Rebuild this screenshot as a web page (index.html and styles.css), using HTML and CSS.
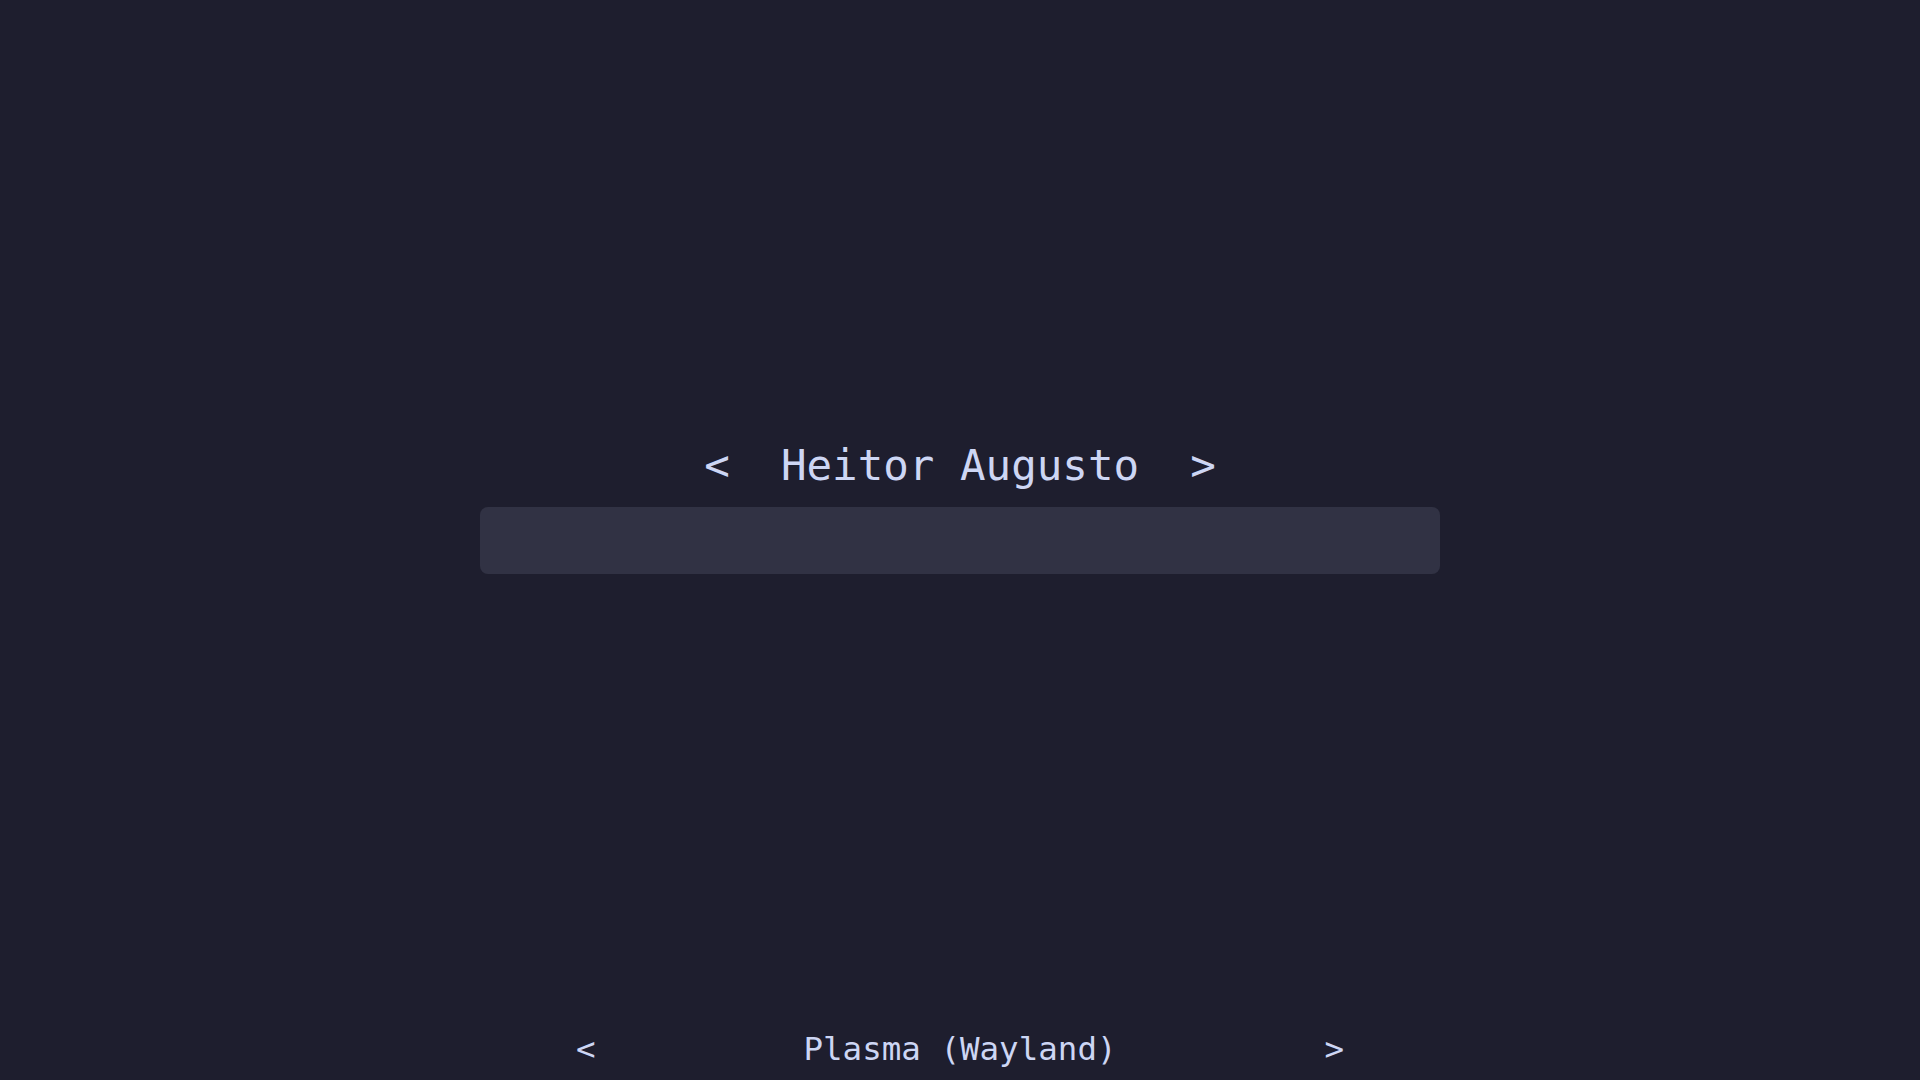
FILE: index.html
```html
<!DOCTYPE html>
<html lang="pt">
<head>
<meta charset="utf-8">
<title>Greeter</title>
<link rel="stylesheet" href="styles.css">
</head>
<body>
<main class="screen">
  <section class="login">
    <div class="user">&lt;  Heitor Augusto  &gt;</div>
    <div class="password"></div>
  </section>
  <footer class="session">
    <span class="arrow">&lt;</span>
    <span class="session-name">Plasma (Wayland)</span>
    <span class="arrow">&gt;</span>
  </footer>
</main>
</body>
</html>
```

FILE: styles.css
```css
html, body {
  margin: 0;
  padding: 0;
  background: #1e1e2e;
}

.screen {
  height: 100vh;
  display: flex;
  flex-direction: column;
  align-items: center;
  color: #cdd6f4;
  font-family: "DejaVu Sans Mono", "Liberation Mono", monospace;
}

.login {
  padding-top: 441px;
  display: flex;
  flex-direction: column;
  align-items: center;
}

.user {
  font-size: 42.5px;
  line-height: 50px;
  white-space: pre;
  margin-bottom: 16px;
}

.password {
  width: 960px;
  height: 67px;
  border-radius: 8px;
  background: #313244;
}

.session {
  margin-top: auto;
  padding-bottom: 12px;
  width: 768px;
  display: flex;
  justify-content: space-between;
  font-size: 32.5px;
  line-height: 38px;
  white-space: pre;
}
```
